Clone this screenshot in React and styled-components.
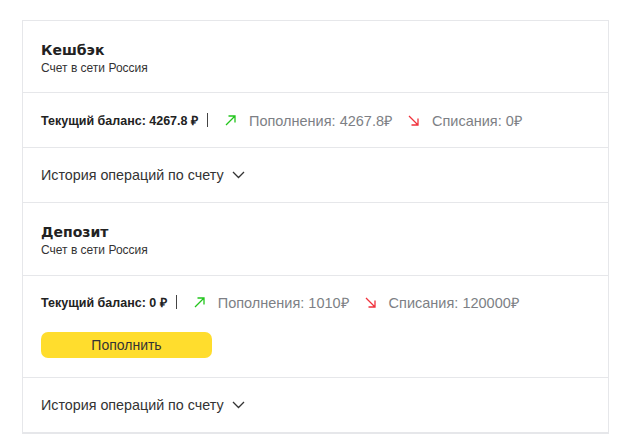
import React from "react";
import styled, { createGlobalStyle } from "styled-components";

const Global = createGlobalStyle`
  html, body { margin: 0; padding: 0; background: #fff; }
  body { font-family: "Liberation Sans", Arial, sans-serif; color: #333; }
`;

const Page = styled.div`
  padding: 20px 20px 0 22px;
`;

const Card = styled.div`
  width: 585px;
  border: 1px solid #e6e7ea;
  border-bottom-width: 2px;
  background: #fff;
`;

const Section = styled.div`
  padding: ${(p) => p.$pad || "0 18px"};
  border-top: ${(p) => (p.$first ? "none" : "1px solid #e6e7ea")};
`;

const Title = styled.div`
  font-family: "DejaVu Sans", Verdana, sans-serif;
  font-weight: 700;
  font-size: 14px;
  line-height: 18px;
  color: #222;
`;

const Subtitle = styled.div`
  font-size: 12px;
  line-height: 16px;
  color: #333;
  margin-top: 1px;
`;

const StatsRow = styled.div`
  display: flex;
  align-items: center;
  height: 18px;
`;

const Balance = styled.span`
  font-weight: 700;
  font-size: 12.5px;
  color: #222;
`;

const Sep = styled.span`
  width: 1px;
  height: 14px;
  background: #444;
  margin: 0 17px 0 9px;
`;

const Stat = styled.span`
  display: inline-flex;
  align-items: center;
  font-size: 14.5px;
  color: #7d7f85;
  margin-right: ${(p) => p.$mr || "0"};
  svg { margin-right: 13px; }
`;

const Button = styled.button`
  display: block;
  width: 171px;
  height: 26px;
  margin-top: 21px;
  border: none;
  border-radius: 7px;
  background: #ffdd2d;
  font-family: "Liberation Sans", Arial, sans-serif;
  font-size: 14px;
  color: #333;
  padding: 0;
`;

const History = styled.div`
  display: flex;
  align-items: center;
  height: 18px;
  font-size: 14.3px;
  color: #333;
  svg { margin-left: 8px; }
`;

const ArrowUp = () => (
  <svg width="11" height="11" viewBox="0 0 11 11" fill="none" stroke="#22c51c" strokeWidth="1.3">
    <path d="M1 10L10 1M3.5 1H10V7.5" />
  </svg>
);
const ArrowDown = () => (
  <svg width="11" height="11" viewBox="0 0 11 11" fill="none" stroke="#f0323c" strokeWidth="1.3">
    <path d="M1 1L10 10M10 3.5V10H3.5" />
  </svg>
);
const Chevron = () => (
  <svg width="13" height="8" viewBox="0 0 13 8" fill="none" stroke="#333" strokeWidth="1.3">
    <path d="M1 1l5.5 5.5L12 1" />
  </svg>
);

const Account = ({ first, title, balance, income, outcome, withButton }) => (
  <>
    <Section $first={first} $pad={first ? "20px 18px 16px" : "20px 18px 17px"}>
      <Title>{title}</Title>
      <Subtitle>Счет в сети Россия</Subtitle>
    </Section>
    <Section $pad={withButton ? "17px 18px 19px" : "18px 18px 18px"}>
      <StatsRow>
        <Balance>Текущий баланс: {balance} ₽</Balance>
        <Sep />
        <Stat $mr="16px"><ArrowUp />Пополнения: {income}₽</Stat>
        <Stat><ArrowDown />Списания: {outcome}₽</Stat>
      </StatsRow>
      {withButton && <Button>Пополнить</Button>}
    </Section>
    <Section $pad="18px 18px 18px">
      <History>История операций по счету<Chevron /></History>
    </Section>
  </>
);

export default function App() {
  return (
    <Page>
      <Global />
      <Card>
        <Account first title="Кешбэк" balance="4267.8" income="4267.8" outcome="0" />
        <Account title="Депозит" balance="0" income="1010" outcome="120000" withButton />
      </Card>
    </Page>
  );
}
